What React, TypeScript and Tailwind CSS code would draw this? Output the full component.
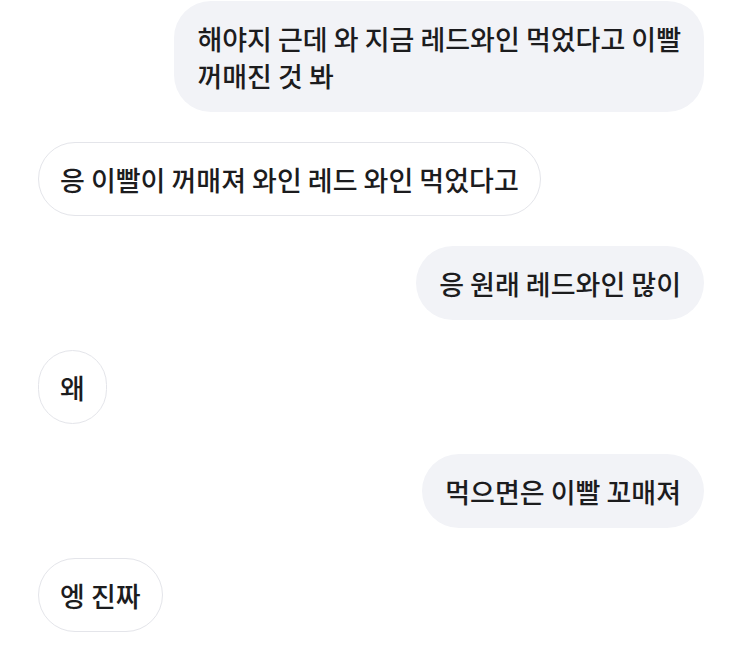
import React from "react";

const font = { fontFamily: '"Noto Sans CJK KR", "Noto Sans", sans-serif' };

function Right({ children }: { children: React.ReactNode }) {
  return (
    <div className="flex justify-end">
      <div className="max-w-[540px] rounded-[37px] bg-[#f2f3f7] px-[23px] pb-[18px] pt-[19px] text-[27px] font-medium leading-[37px] text-[#1c1c1e]">
        {children}
      </div>
    </div>
  );
}

function Left({ children }: { children: React.ReactNode }) {
  return (
    <div className="flex justify-start">
      <div className="rounded-[37px] border border-[#e4e5ea] bg-white px-[21px] pb-[17px] pt-[18px] text-[27px] font-medium leading-[37px] text-[#1c1c1e]">
        {children}
      </div>
    </div>
  );
}

export default function App() {
  return (
    <div className="h-[646px] w-[743px] overflow-hidden bg-white" style={font}>
      <div className="flex flex-col gap-[30px] pl-[38px] pr-[39px] pt-[1px]">
        <Right>
          해야지 근데 와 지금 레드와인 먹었다고 이빨
          <br />
          꺼매진 것 봐
        </Right>
        <Left>응 이빨이 꺼매져 와인 레드 와인 먹었다고</Left>
        <Right>응 원래 레드와인 많이</Right>
        <Left>왜</Left>
        <Right>먹으면은 이빨 꼬매져</Right>
        <Left>엥 진짜</Left>
      </div>
    </div>
  );
}
